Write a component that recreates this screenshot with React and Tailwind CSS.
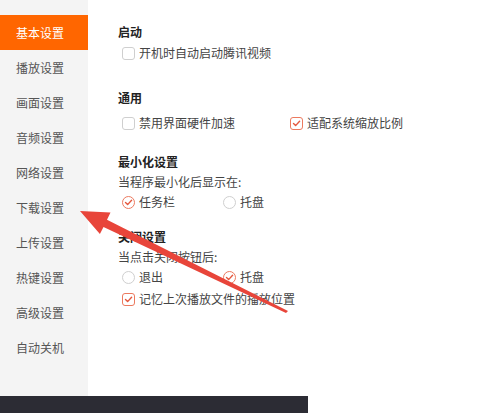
import React from "react";

const font = { fontFamily: '"Noto Sans CJK SC", "Noto Sans", sans-serif' };

function Check({ checked, round }) {
  return (
    <span
      className={`relative inline-flex h-[13px] w-[13px] shrink-0 items-center justify-center border bg-white ${
        round ? "rounded-full" : "rounded-[3px]"
      } ${checked ? "border-[#ec7a5f]" : "border-[#cfcfcf]"}`}
    >
      {checked && (
        <svg width="9" height="9" viewBox="0 0 9 9">
          <path d="M1.5 4.6 L3.6 6.6 L7.6 2.2" fill="none" stroke="#e4573d" strokeWidth="1.4" strokeLinecap="round" strokeLinejoin="round" />
        </svg>
      )}
    </span>
  );
}

function Opt({ checked, round, label, className = "" }) {
  return (
    <div className={`flex items-center gap-[4px] ${className}`}>
      <Check checked={checked} round={round} />
      <span>{label}</span>
    </div>
  );
}

const items = ["基本设置", "播放设置", "画面设置", "音频设置", "网络设置", "下载设置", "上传设置", "热键设置", "高级设置", "自动关机"];

export default function App() {
  return (
    <div className="relative flex h-[413px] w-[488px] flex-col overflow-hidden bg-white text-[12px]" style={font}>
      <div className="flex flex-1">
        <div className="w-[88px] bg-[#f4f4f4] pt-[15px]">
          {items.map((t, i) => (
            <div
              key={t}
              className={`flex h-[35px] items-center pl-[16px] ${i === 0 ? "bg-[#ff6600] text-white" : "text-[#555]"}`}
            >
              {t}
            </div>
          ))}
        </div>
        <div className="flex flex-1 flex-col pl-[30px] pt-[22px] text-[#444]">
          <div className="flex h-[20px] items-center font-bold text-[#222]">启动</div>
          <Opt className="ml-[4px] mt-[1px] h-[20px]" label="开机时自动启动腾讯视频" />
          <div className="mt-[25px] flex h-[20px] items-center font-bold text-[#222]">通用</div>
          <div className="ml-[4px] mt-[5px] flex h-[20px] items-center">
            <Opt className="w-[168px]" label="禁用界面硬件加速" />
            <Opt checked label="适配系统缩放比例" />
          </div>
          <div className="mt-[19px] flex h-[20px] items-center font-bold text-[#222]">最小化设置</div>
          <div className="flex h-[20px] items-center">当程序最小化后显示在:</div>
          <div className="ml-[4px] flex h-[20px] items-center">
            <Opt round checked className="w-[101px]" label="任务栏" />
            <Opt round label="托盘" />
          </div>
          <div className="mt-[15px] flex h-[20px] items-center font-bold text-[#222]">关闭设置</div>
          <div className="flex h-[20px] items-center">当点击关闭按钮后:</div>
          <div className="ml-[4px] flex h-[20px] items-center">
            <Opt round className="w-[101px]" label="退出" />
            <Opt round checked label="托盘" />
          </div>
          <Opt checked className="ml-[4px] mt-[2px] h-[20px]" label="记忆上次播放文件的播放位置" />
        </div>
      </div>
      <div className="h-[17px] w-[308px] bg-[#2c2c34]" />
      <svg className="pointer-events-none absolute left-0 top-0" width="488" height="413" viewBox="0 0 488 413">
        <polygon
          points="80,211 110.5,212.5 107,219.7 288,311 286,313 103.5,226.9 99.9,234.1"
          fill="#e8453a"
        />
      </svg>
    </div>
  );
}
